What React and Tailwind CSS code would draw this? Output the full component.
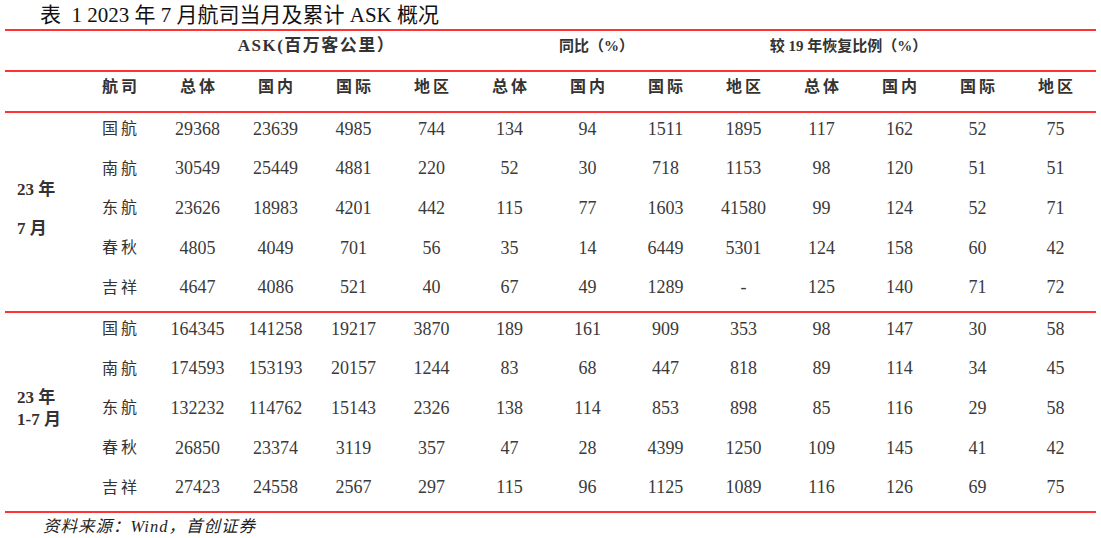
import React from "react";

const FONT = { fontFamily: '"Liberation Serif", "Noto Sans CJK SC", serif' };

const g1 = [
  ["国航", "29368", "23639", "4985", "744", "134", "94", "1511", "1895", "117", "162", "52", "75"],
  ["南航", "30549", "25449", "4881", "220", "52", "30", "718", "1153", "98", "120", "51", "51"],
  ["东航", "23626", "18983", "4201", "442", "115", "77", "1603", "41580", "99", "124", "52", "71"],
  ["春秋", "4805", "4049", "701", "56", "35", "14", "6449", "5301", "124", "158", "60", "42"],
  ["吉祥", "4647", "4086", "521", "40", "67", "49", "1289", "-", "125", "140", "71", "72"],
];
const g2 = [
  ["国航", "164345", "141258", "19217", "3870", "189", "161", "909", "353", "98", "147", "30", "58"],
  ["南航", "174593", "153193", "20157", "1244", "83", "68", "447", "818", "89", "114", "34", "45"],
  ["东航", "132232", "114762", "15143", "2326", "138", "114", "853", "898", "85", "116", "29", "58"],
  ["春秋", "26850", "23374", "3119", "357", "47", "28", "4399", "1250", "109", "145", "41", "42"],
  ["吉祥", "27423", "24558", "2567", "297", "115", "96", "1125", "1089", "116", "126", "69", "75"],
];
const heads = ["航司", "总体", "国内", "国际", "地区", "总体", "国内", "国际", "地区", "总体", "国内", "国际", "地区"];

function Line() {
  return <div className="h-[2px] w-[1091px] bg-[#f33]" />;
}

function Group({ rows, label, lh }) {
  return (
    <div className="flex">
      <div className="w-[75.5px] flex flex-col justify-center pl-[12px] pb-[6px] text-[17px] font-bold text-[#333]">
        {label.map((l, i) => (
          <div key={i} className={lh}>{l}</div>
        ))}
      </div>
      <div className="flex flex-col">
        {rows.map((r, i) => (
          <div key={i} className="grid grid-cols-[repeat(13,78px)] h-[39.6px] items-center pb-[7px]">
            {r.map((c, j) =>
              j === 0 ? (
                <div key={j} className="text-center text-[16px] tracking-[3px] pl-[3px] text-[#333]">{c}</div>
              ) : (
                <div key={j} className="text-center text-[18px] text-[#3a3a3a]">{c}</div>
              )
            )}
          </div>
        ))}
      </div>
    </div>
  );
}

export default function App() {
  return (
    <div className="w-[1101px] h-[538px] bg-white text-[#222]" style={FONT}>
      <div className="h-[29px] pl-[40px] text-[21px] leading-[29px] pt-[1px] text-[#111]">
        表&nbsp;&nbsp;1 2023 年 7 月航司当月及累计 ASK 概况
      </div>
      <div className="ml-[5px]">
        <Line />
        <div className="h-[39px] flex items-center pb-[9px] font-bold text-[#333]">
          <div className="w-[158.5px]" />
          <div className="w-[306px] text-center text-[17px] tracking-[1.5px]">ASK(百万客公里）</div>
          <div className="w-[254px] text-center text-[15px]">同比（%）</div>
          <div className="w-[250px] text-center text-[15px]">较 19 年恢复比例（%）</div>
        </div>
        <Line />
        <div className="h-[39px] grid grid-cols-[75.5px_repeat(13,78px)] items-center pb-[9px] font-bold text-[16px] tracking-[3px] text-[#333]">
          <div />
          {heads.map((h, i) => (
            <div key={i} className="text-center pl-[3px]">{h}</div>
          ))}
        </div>
        <Line />
        <Group rows={g1} label={["23 年", "7 月"]} lh="leading-[39px]" />
        <Line />
        <Group rows={g2} label={["23 年", "1-7 月"]} lh="leading-[22px]" />
        <Line />
        <div className="pl-[38px] pt-[2px] text-[16.5px] italic tracking-[1px] text-[#222]">
          资料来源：Wind，首创证券
        </div>
      </div>
    </div>
  );
}
